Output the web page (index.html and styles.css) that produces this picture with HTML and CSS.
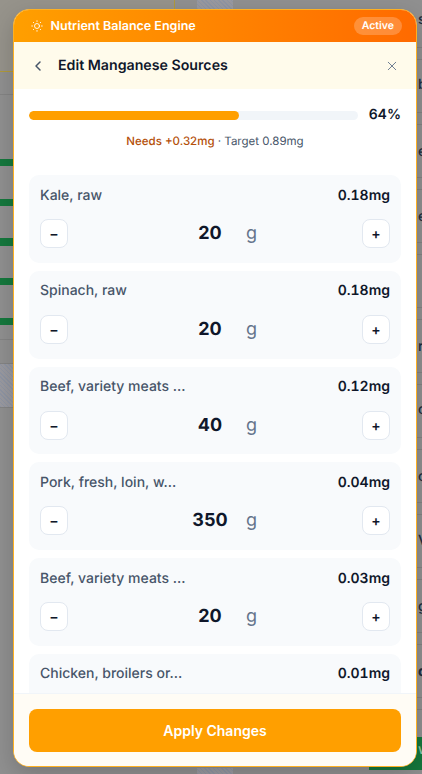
FILE: index.html
```html
<!DOCTYPE html>
<html lang="en">
<head>
<meta charset="utf-8">
<title>Edit Manganese Sources</title>
<link rel="stylesheet" href="styles.css">
</head>
<body>
<div class="backdrop" aria-hidden="true">
  <div class="warm"></div>
  <div class="amber-h"></div>
  <div class="amber-v"></div>
  <div class="noise n1"></div>
  <div class="noise n2"></div>
  <div class="noise n3"></div>
  <i class="green g1"></i><i class="green g2"></i><i class="green g3"></i><i class="green g4"></i><i class="green g5"></i>
  <div class="green-b"></div>
  <i class="rule r1"></i><i class="rule r2"></i><i class="rule r3"></i><i class="rule r4"></i>
  <div class="rules-right"></div>
  <span class="peek p1">sl</span><span class="peek p2">b</span><span class="peek p3">e</span><span class="peek p4">e</span><span class="peek p5">r</span><span class="peek p6">o</span><span class="peek p7">o</span><span class="peek p8">Vi</span><span class="peek p9">g</span><span class="peek p10">d</span><span class="peek p11">w</span>
</div>

<div class="overlay">
  <section class="modal">
    <header class="topbar">
      <svg class="sun" viewBox="0 0 24 24" fill="none" stroke="currentColor" stroke-width="1.800" stroke-linecap="round"><circle cx="12" cy="12" r="5"/><path d="M12 1.500v1.500M12 21v1.500M1.500 12H3M21 12h1.500M4.600 4.600l1 1M18.400 18.400l1 1M4.600 19.400l1-1M18.400 5.600l1-1"/></svg>
      <span class="brand">Nutrient Balance Engine</span>
      <span class="pill">Active</span>
    </header>
    <div class="subbar">
      <svg class="chev" viewBox="0 0 14 14" fill="none" stroke="currentColor" stroke-width="1.500" stroke-linecap="round" stroke-linejoin="round"><path d="M9 3L5 7l4 4"/></svg>
      <h1 class="title">Edit Manganese Sources</h1>
      <svg class="close" viewBox="0 0 24 24" fill="none" stroke="currentColor" stroke-width="2.200" stroke-linecap="round"><path d="M3 3l18 18M21 3L3 21"/></svg>
    </div>
    <div class="scroll">
      <div class="progress">
        <div class="track"><div class="fill" style="width:64%"></div></div>
        <span class="pct">64%</span>
      </div>
      <p class="needs"><span class="need">Needs +0.32mg</span> · Target 0.89mg</p>
      <div class="list">
        <article class="item">
          <div class="row"><span class="name">Kale, raw</span><span class="mg">0.18mg</span></div>
          <div class="ctrl"><button class="step">−</button><div class="qty"><b>20</b><span>g</span></div><button class="step">+</button></div>
        </article>
        <article class="item">
          <div class="row"><span class="name">Spinach, raw</span><span class="mg">0.18mg</span></div>
          <div class="ctrl"><button class="step">−</button><div class="qty"><b>20</b><span>g</span></div><button class="step">+</button></div>
        </article>
        <article class="item">
          <div class="row"><span class="name">Beef, variety meats ...</span><span class="mg">0.12mg</span></div>
          <div class="ctrl"><button class="step">−</button><div class="qty"><b>40</b><span>g</span></div><button class="step">+</button></div>
        </article>
        <article class="item">
          <div class="row"><span class="name">Pork, fresh, loin, w...</span><span class="mg">0.04mg</span></div>
          <div class="ctrl"><button class="step">−</button><div class="qty"><b>350</b><span>g</span></div><button class="step">+</button></div>
        </article>
        <article class="item">
          <div class="row"><span class="name">Beef, variety meats ...</span><span class="mg">0.03mg</span></div>
          <div class="ctrl"><button class="step">−</button><div class="qty"><b>20</b><span>g</span></div><button class="step">+</button></div>
        </article>
        <article class="item">
          <div class="row"><span class="name">Chicken, broilers or...</span><span class="mg">0.01mg</span></div>
          <div class="ctrl"><button class="step">−</button><div class="qty"><b>100</b><span>g</span></div><button class="step">+</button></div>
        </article>
      </div>
    </div>
    <footer class="foot"><button class="apply">Apply Changes</button></footer>
  </section>
</div>
</body>
</html>
```
FILE: styles.css
```css
* { box-sizing: border-box; }
html, body { margin: 0; height: 100%; overflow: hidden; }
body { font-family: Inter, "Liberation Sans", sans-serif; background: #959595; color: #0f172a; text-rendering: geometricPrecision; -webkit-font-smoothing: antialiased; }

.backdrop { position: fixed; inset: 0; overflow: hidden; background: #909090; }
.backdrop i { position: absolute; display: block; }
.warm { position: absolute; left: 0; top: 0; width: 174px; height: 71px; background: #96938b; }
.amber-h { position: absolute; left: 0; top: 71px; width: 14px; height: 1px; background: #b09a3c; }
.amber-v { position: absolute; left: 174px; top: 0; width: 1px; height: 10px; background: #b09a3c; }
.noise { position: absolute; background: repeating-linear-gradient(45deg, #8f95a3 0 1px, #9a9aa0 1px 3px); }
.n1 { left: 197px; top: 0; width: 36px; height: 9px; }
.n2 { left: 0; top: 364px; width: 13px; height: 43px; }
.n3 { left: 197px; top: 768px; width: 36px; height: 6px; }
.green { left: 0; width: 13px; height: 7px; background: #15783d; }
.g1 { top: 159px; } .g2 { top: 199px; } .g3 { top: 238px; height: 8px; } .g4 { top: 278px; } .g5 { top: 318px; }
.green-b { position: absolute; left: 369px; top: 737px; width: 53px; height: 33px; background: #15783d; }
.rule { left: 0; width: 13px; height: 1px; background: #848484; }
.r1 { top: 94px; } .r2 { top: 339px; } .r3 { top: 363px; } .r4 { top: 407px; }
.rules-right {
  position: absolute; left: 417px; top: 47px; width: 5px; height: 690px;
  background: repeating-linear-gradient(#828282 0 1px, transparent 1px 12px, #828282 12px 13px, transparent 13px 65px);
}
.peek { position: absolute; left: 418px; font-size: 14px; font-weight: 500; line-height: 16px; color: #1e2a3a; }
.p1 { top: 12px; } .p2 { top: 77px; } .p3 { top: 144px; } .p4 { top: 209px; } .p5 { top: 339px; }
.p6 { top: 402px; } .p7 { top: 469px; } .p8 { top: 533px; } .p9 { top: 599px; } .p10 { top: 664px; font-weight: 700; }
.p11 { top: 742px; color: #8fc7a3; }

.overlay { position: fixed; inset: 0; padding: 9px 5px 7px 13px; display: flex; }
.modal {
  flex: 1; min-width: 0; display: flex; flex-direction: column; overflow: hidden;
  background: #fff; border: 1.500px solid #fdb022; border-radius: 16px;
  box-shadow: 0 8px 24px rgba(0,0,0,.18);
}

.topbar {
  height: 32px; flex: none; display: flex; align-items: center; padding: 0 14px 0 16.500px; color: #fff;
  background: linear-gradient(90deg, #ff9f00, #ff6a00);
}
.sun { width: 12px; height: 12px; flex: none; margin-right: 8px; }
.brand { font-size: 12.500px; font-weight: 600; flex: 1; }
.pill { font-size: 10.500px; font-weight: 600; background: rgba(255,255,255,.22); border-radius: 999px; padding: 2px 8px; line-height: 14px; }

.subbar { height: 47px; flex: none; display: flex; align-items: center; padding: 0 19px 0 17px; background: #fffbeb; }
.chev { width: 14px; height: 14px; color: #475569; flex: none; margin-right: 13px; }
.title { flex: 1; margin: 0; font-size: 14.200px; font-weight: 600; color: #0f172a; }
.close { width: 10px; height: 10px; color: #64748b; flex: none; }

.scroll { flex: 1; min-height: 0; overflow: hidden; padding: 21px 15px 0 15px; }
.progress { display: flex; align-items: center; gap: 11px; }
.track { flex: 1; height: 9px; background: #f1f5f9; border-radius: 5px; overflow: hidden; }
.fill { height: 100%; background: #ff9f00; border-radius: 5px; }
.pct { font-size: 14px; font-weight: 600; line-height: 10px; color: #0f172a; }
.needs { margin: 13px 0 0; font-size: 11.500px; line-height: 16px; text-align: center; color: #475569; }
.need { color: #b4500a; font-weight: 500; }

.list { margin-top: 26px; display: flex; flex-direction: column; gap: 8px; }
.item { height: 87.800px; flex: none; background: #f8fafc; border-radius: 10px; padding: 11px 11px 0; }
.row { display: flex; justify-content: space-between; align-items: center; height: 18px; font-size: 14px; }
.name { color: #475569; font-weight: 500; }
.mg { color: #0f172a; font-weight: 600; font-variant-numeric: tabular-nums; }
.ctrl { display: flex; align-items: center; justify-content: space-between; margin-top: 15px; }
.step {
  width: 28px; height: 29px; padding: 0; background: #fff; border: 1px solid #e2e8f0; border-radius: 8px;
  font: 600 14px Inter, "Liberation Sans", sans-serif; color: #0f172a;
}
.qty { flex: 1; display: flex; justify-content: center; align-items: baseline; gap: 6px; padding-left: 7px; }
.qty b { width: 60px; text-align: center; font-size: 18px; font-weight: 700; color: #0f172a; }
.qty span { width: 11px; font-size: 18px; color: #64748b; }

.foot { flex: none; height: 73px; padding: 15px 15px 0; background: #fffcf5; border-top: 1px solid #f1f5f9; }
.apply {
  width: 100%; height: 43px; border: 0; border-radius: 8px; background: #ff9f00; color: #fff;
  font: 600 14px Inter, "Liberation Sans", sans-serif;
}
```
